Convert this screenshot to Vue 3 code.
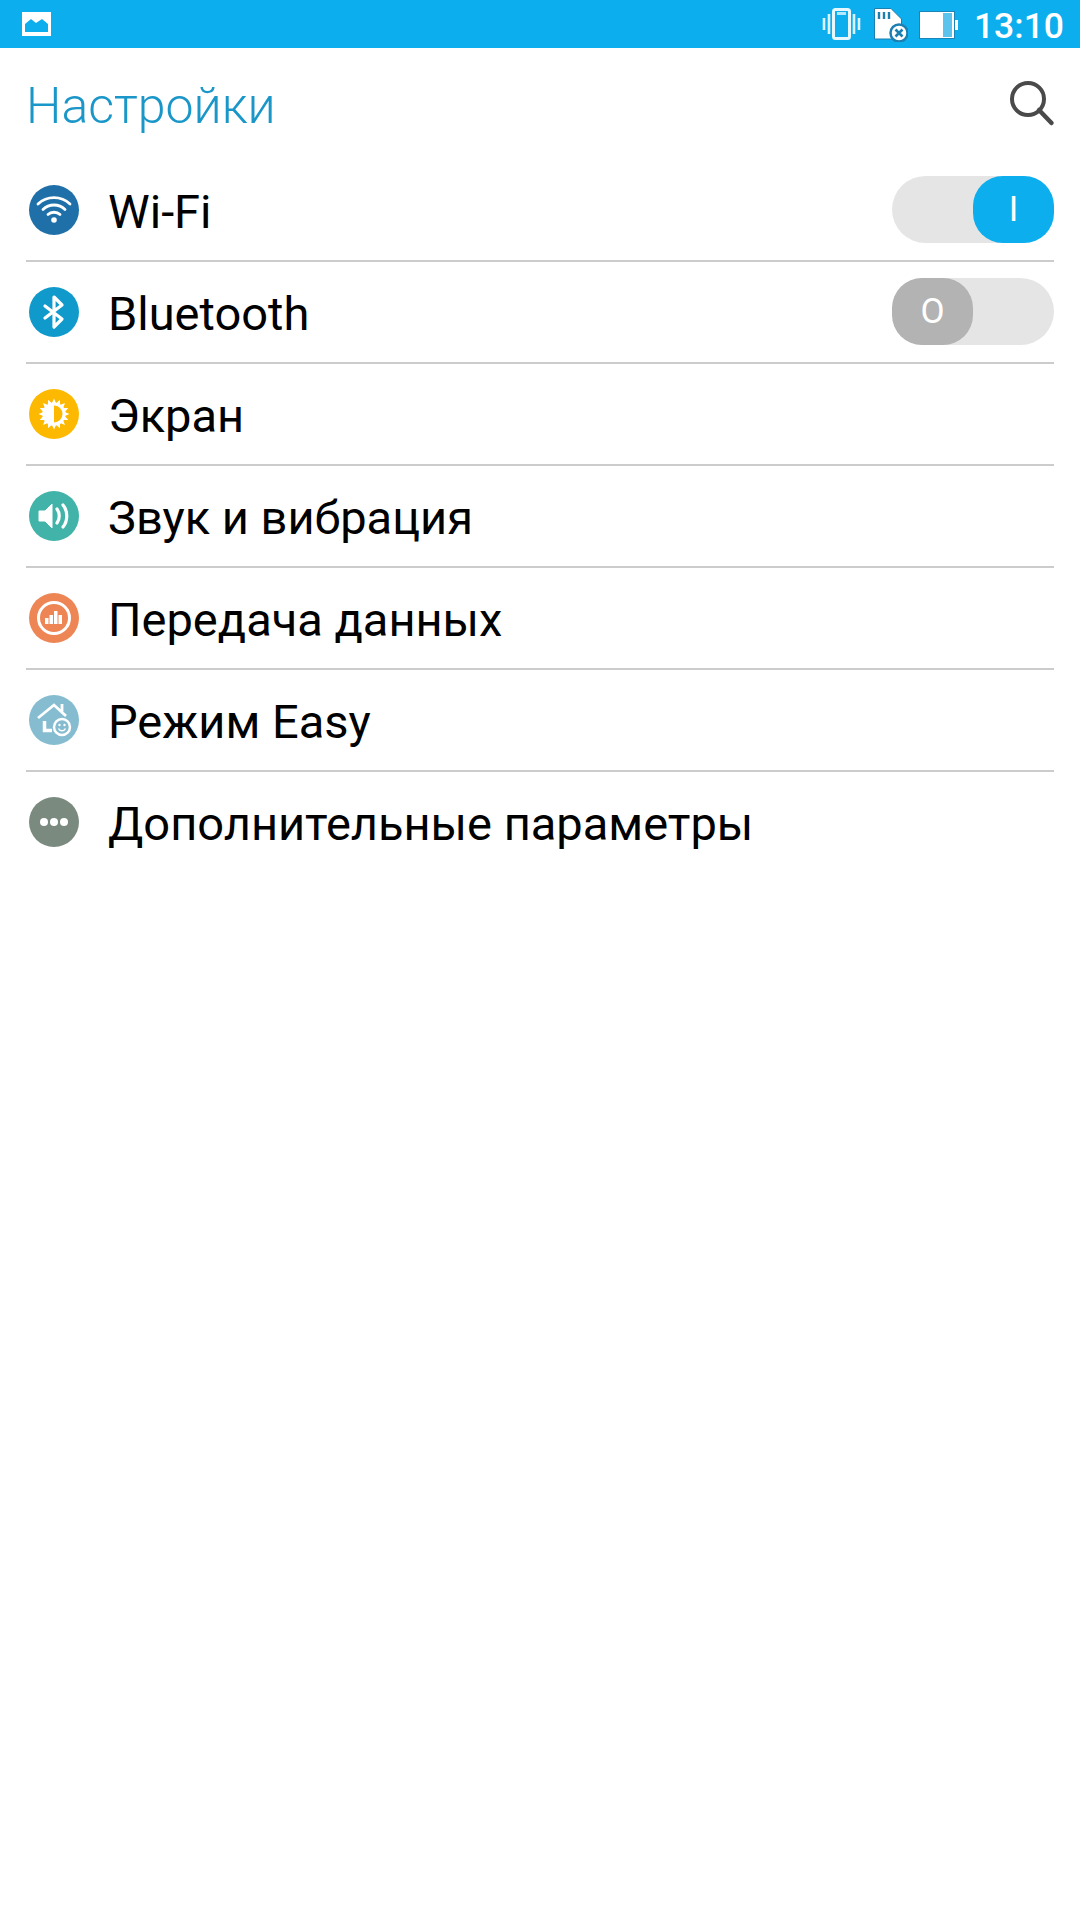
<template>
  <div class="screen">
    <!-- status bar -->
    <div class="status-bar">
      <svg class="pic-icon" width="29" height="24" viewBox="0 0 29 24">
        <rect width="29" height="24" fill="#fff" />
        <path d="M3 20V12L9 7L14 11L20 7L26 12V20Z" fill="#0daeee" />
      </svg>
      <div class="status-right">
        <svg width="39" height="32" viewBox="0 0 39 32" class="st-vibrate">
          <rect x="11.500" y="1.500" width="16" height="29" rx="2" fill="none" stroke="#fff" stroke-width="3" opacity="0.9" />
          <rect x="15" y="4" width="9" height="3" fill="#fff" opacity="0.7" />
          <path d="M7 6V26M2 10V22M32 6V26M37 10V22" stroke="#fff" stroke-width="2.600" fill="none" opacity="0.85" />
        </svg>
        <svg width="34" height="34" viewBox="0 0 34 34" class="st-sd">
          <path d="M0.5 0.5H17L27.500 11V31H0.5Z" fill="#fff" stroke="#1b7fb0" stroke-width="1" />
          <path d="M5 4V11M10 4V11M15 4V11" stroke="#1b7fb0" stroke-width="2.4" />
          <circle cx="25" cy="25" r="8.500" fill="#fff" stroke="#1b7fb0" stroke-width="2.500" />
          <path d="M21.500 21.500L28.500 28.500M28.500 21.500L21.500 28.500" stroke="#1b7fb0" stroke-width="2.6" />
        </svg>
        <svg width="40" height="28" viewBox="0 0 40 28" class="st-batt">
          <rect x="0.5" y="0.5" width="35" height="27" fill="#fff" stroke="#1b85b8" />
          <rect x="24" y="2" width="9" height="24" fill="#5cc3ec" />
          <rect x="36" y="9" width="3" height="10" fill="#fff" />
        </svg>
        <span class="clock">13:10</span>
      </div>
    </div>

    <!-- header -->
    <div class="header">
      <span class="title">Настройки</span>
      <svg class="search" width="48" height="48" viewBox="0 0 48 48">
        <circle cx="20" cy="20" r="16" fill="none" stroke="#4a4a4a" stroke-width="4" />
        <path d="M31 31L43.500 44" stroke="#4a4a4a" stroke-width="4.5" stroke-linecap="round" />
      </svg>
    </div>

    <!-- list -->
    <div class="list">
      <div v-for="item in items" :key="item.name" class="row">
        <span class="icon" :style="{ background: item.color }">
          <svg width="50" height="50" viewBox="0 0 50 50" v-html="item.svg"></svg>
        </span>
        <span class="name">{{ item.name }}</span>
        <div v-if="item.toggle === 'on'" class="toggle on"><span class="knob">I</span></div>
        <div v-if="item.toggle === 'off'" class="toggle off"><span class="knob">O</span></div>
      </div>
    </div>
  </div>
</template>

<script setup>
// rays of the brightness icon
const rays = Array.from({ length: 16 }, (_, i) => {
  const a = (i * Math.PI) / 8
  const b = a + Math.PI / 16
  const c = a - Math.PI / 16
  const p = (r, t) => `${(25 + r * Math.sin(t)).toFixed(1)} ${(25 - r * Math.cos(t)).toFixed(1)}`
  return `M${p(15.5, a)}L${p(11, b)}L${p(11, c)}Z`
}).join('')

const items = [
  {
    name: 'Wi-Fi',
    color: '#1f70a8',
    toggle: 'on',
    svg: `<path d="M9 19C18 10.500 32 10.500 41 19M14 24.500C20 18.500 30 18.500 36 24.500M19 29.500C22 26.500 28 26.500 31 29.500" fill="none" stroke="#fff" stroke-width="2.800" stroke-linecap="round"/><circle cx="25" cy="35" r="2.800" fill="#fff"/>`
  },
  {
    name: 'Bluetooth',
    color: '#0f9acb',
    toggle: 'off',
    svg: `<path d="M16 19L33 32L25 40V10L33 18L16 31" fill="none" stroke="#fff" stroke-width="3.200" stroke-linecap="round" stroke-linejoin="round"/>`
  },
  {
    name: 'Экран',
    color: '#fdb900',
    svg: `<circle cx="25" cy="25" r="11.500" fill="#fff"/><path d="${rays}" fill="#fff"/><path d="M25 16.500A8.500 8.500 0 0 1 25 33.500Z" fill="#fdb900"/>`
  },
  {
    name: 'Звук и вибрация',
    color: '#41b3a8',
    svg: `<path d="M10 20H16L23 13V37L16 30H10Z" fill="#fff" stroke="#fff" stroke-linejoin="round"/><path d="M28 18C31 22 31 28 28 32M34 14C39 20 39 30 34 36" fill="none" stroke="#fff" stroke-width="3.200" stroke-linecap="round"/>`
  },
  {
    name: 'Передача данных',
    color: '#ee8555',
    svg: `<circle cx="25" cy="25" r="15.500" fill="none" stroke="#fff" stroke-width="3"/><path d="M16 25h3.500v6H16zM20.500 22h3.500v9H20.500zM25 18h3.500v13H25zM29.500 22h3.500v9H29.500z" fill="#fff"/>`
  },
  {
    name: 'Режим Easy',
    color: '#85bcd0',
    svg: `<path d="M9 23L25 10L37 21M33 17V9" fill="none" stroke="#fff" stroke-width="2.800"/><path d="M15.500 26V35.500H23" fill="none" stroke="#fff" stroke-width="3.500"/><circle cx="33" cy="32" r="8" fill="#85bcd0" stroke="#fff" stroke-width="2.500"/><circle cx="30.500" cy="30" r="1.200" fill="#fff"/><circle cx="35.500" cy="30" r="1.200" fill="#fff"/><path d="M29.500 33.500C31 36.500 35 36.500 36.500 33.500" fill="none" stroke="#fff" stroke-width="1.500"/>`
  },
  {
    name: 'Дополнительные параметры',
    color: '#7b8a7f',
    svg: `<circle cx="15" cy="25" r="4" fill="#fff"/><circle cx="25" cy="25" r="4" fill="#fff"/><circle cx="35" cy="25" r="4" fill="#fff"/>`
  }
]
</script>

<style scoped>
.screen {
  width: 1080px;
  height: 1920px;
  background: #fff;
  font-family: Roboto, "Noto Sans", sans-serif;
  overflow: hidden;
}

.status-bar {
  height: 48px;
  background: #0daeee;
  display: flex;
  align-items: center;
  justify-content: space-between;
  padding: 0 16px 0 22px;
}

.status-right {
  display: flex;
  align-items: center;
}

.st-vibrate {
  margin-right: 13px;
}

.st-sd {
  margin-right: 11px;
  margin-top: 2px;
}

.st-batt {
  margin-right: 15px;
  margin-top: 2px;
}

.clock {
  color: #fff;
  font-size: 35.5px;
  font-weight: 500;
  line-height: 48px;
  padding-top: 3px;
}

.header {
  height: 112px;
  display: flex;
  align-items: center;
  justify-content: space-between;
  padding: 0 24px 0 26px;
  box-sizing: border-box;
}

.title {
  font-size: 50px;
  font-weight: 300;
  color: #1a96c8;
  padding-top: 4px;
}

.search {
  margin-top: -2px;
}

.list {
  margin: 0 26px;
}

.row {
  height: 102px;
  box-sizing: border-box;
  border-bottom: 2px solid #cccccc;
  display: flex;
  align-items: center;
}

.row:last-child {
  border-bottom-color: transparent;
}

.icon {
  width: 50px;
  height: 50px;
  border-radius: 50%;
  margin-left: 3px;
  flex: none;
}

.icon svg {
  display: block;
}

.name {
  margin-left: 29px;
  padding-top: 3px;
  font-size: 47px;
  color: #000;
  flex: 1;
}

.toggle {
  width: 162px;
  height: 67px;
  margin-bottom: 2px;
  border-radius: 34px;
  background: #e5e5e5;
  display: flex;
}

.toggle.on {
  justify-content: flex-end;
}

.knob {
  width: 81px;
  height: 67px;
  border-radius: 30px;
  color: #fff;
  font-size: 35px;
  display: flex;
  align-items: center;
  justify-content: center;
}

.on .knob {
  background: #0daeee;
}

.off .knob {
  background: #b3b3b3;
}
</style>

<style>
body {
  background: #fff;
}
</style>
